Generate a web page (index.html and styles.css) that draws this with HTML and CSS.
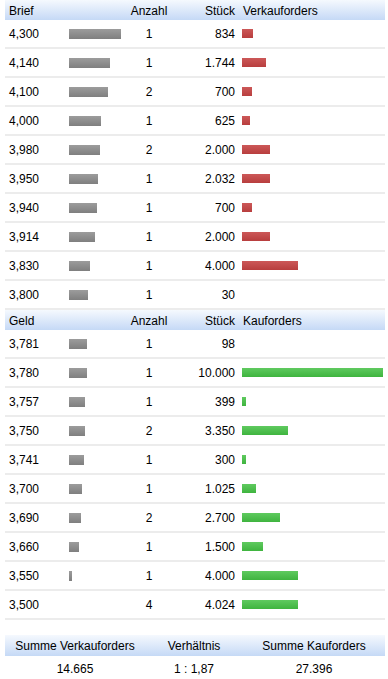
FILE: index.html
```html
<!DOCTYPE html>
<html lang="de">
<head>
<meta charset="utf-8">
<title>Orderbuch</title>
<link rel="stylesheet" href="styles.css">
</head>
<body>
<div class="book">
  <div class="row head">
    <div class="c-price">Brief</div>
    <div class="c-bar"></div>
    <div class="c-num">Anzahl</div>
    <div class="c-qty">Stück</div>
    <div class="c-ord">Verkauforders</div>
  </div>
  <div class="row"><div class="c-price">4,300</div><div class="c-bar"><span class="gbar" style="width:52px"></span></div><div class="c-num">1</div><div class="c-qty">834</div><div class="c-ord"><span class="rbar" style="width:11px"></span></div></div>
  <div class="row"><div class="c-price">4,140</div><div class="c-bar"><span class="gbar" style="width:41px"></span></div><div class="c-num">1</div><div class="c-qty">1.744</div><div class="c-ord"><span class="rbar" style="width:24px"></span></div></div>
  <div class="row"><div class="c-price">4,100</div><div class="c-bar"><span class="gbar" style="width:39px"></span></div><div class="c-num">2</div><div class="c-qty">700</div><div class="c-ord"><span class="rbar" style="width:10px"></span></div></div>
  <div class="row"><div class="c-price">4,000</div><div class="c-bar"><span class="gbar" style="width:32px"></span></div><div class="c-num">1</div><div class="c-qty">625</div><div class="c-ord"><span class="rbar" style="width:8px"></span></div></div>
  <div class="row"><div class="c-price">3,980</div><div class="c-bar"><span class="gbar" style="width:31px"></span></div><div class="c-num">2</div><div class="c-qty">2.000</div><div class="c-ord"><span class="rbar" style="width:28px"></span></div></div>
  <div class="row"><div class="c-price">3,950</div><div class="c-bar"><span class="gbar" style="width:29px"></span></div><div class="c-num">1</div><div class="c-qty">2.032</div><div class="c-ord"><span class="rbar" style="width:28px"></span></div></div>
  <div class="row"><div class="c-price">3,940</div><div class="c-bar"><span class="gbar" style="width:28px"></span></div><div class="c-num">1</div><div class="c-qty">700</div><div class="c-ord"><span class="rbar" style="width:10px"></span></div></div>
  <div class="row"><div class="c-price">3,914</div><div class="c-bar"><span class="gbar" style="width:26px"></span></div><div class="c-num">1</div><div class="c-qty">2.000</div><div class="c-ord"><span class="rbar" style="width:28px"></span></div></div>
  <div class="row"><div class="c-price">3,830</div><div class="c-bar"><span class="gbar" style="width:21px"></span></div><div class="c-num">1</div><div class="c-qty">4.000</div><div class="c-ord"><span class="rbar" style="width:56px"></span></div></div>
  <div class="row"><div class="c-price">3,800</div><div class="c-bar"><span class="gbar" style="width:19px"></span></div><div class="c-num">1</div><div class="c-qty">30</div><div class="c-ord"></div></div>

  <div class="row head">
    <div class="c-price">Geld</div>
    <div class="c-bar"></div>
    <div class="c-num">Anzahl</div>
    <div class="c-qty">Stück</div>
    <div class="c-ord">Kauforders</div>
  </div>
  <div class="row"><div class="c-price">3,781</div><div class="c-bar"><span class="gbar" style="width:18px"></span></div><div class="c-num">1</div><div class="c-qty">98</div><div class="c-ord"></div></div>
  <div class="row"><div class="c-price">3,780</div><div class="c-bar"><span class="gbar" style="width:18px"></span></div><div class="c-num">1</div><div class="c-qty">10.000</div><div class="c-ord"><span class="kbar" style="width:141px"></span></div></div>
  <div class="row"><div class="c-price">3,757</div><div class="c-bar"><span class="gbar" style="width:16px"></span></div><div class="c-num">1</div><div class="c-qty">399</div><div class="c-ord"><span class="kbar" style="width:4px"></span></div></div>
  <div class="row"><div class="c-price">3,750</div><div class="c-bar"><span class="gbar" style="width:16px"></span></div><div class="c-num">2</div><div class="c-qty">3.350</div><div class="c-ord"><span class="kbar" style="width:46px"></span></div></div>
  <div class="row"><div class="c-price">3,741</div><div class="c-bar"><span class="gbar" style="width:15px"></span></div><div class="c-num">1</div><div class="c-qty">300</div><div class="c-ord"><span class="kbar" style="width:4px"></span></div></div>
  <div class="row"><div class="c-price">3,700</div><div class="c-bar"><span class="gbar" style="width:13px"></span></div><div class="c-num">1</div><div class="c-qty">1.025</div><div class="c-ord"><span class="kbar" style="width:14px"></span></div></div>
  <div class="row"><div class="c-price">3,690</div><div class="c-bar"><span class="gbar" style="width:12px"></span></div><div class="c-num">2</div><div class="c-qty">2.700</div><div class="c-ord"><span class="kbar" style="width:38px"></span></div></div>
  <div class="row"><div class="c-price">3,660</div><div class="c-bar"><span class="gbar" style="width:10px"></span></div><div class="c-num">1</div><div class="c-qty">1.500</div><div class="c-ord"><span class="kbar" style="width:21px"></span></div></div>
  <div class="row"><div class="c-price">3,550</div><div class="c-bar"><span class="gbar" style="width:3px"></span></div><div class="c-num">1</div><div class="c-qty">4.000</div><div class="c-ord"><span class="kbar" style="width:56px"></span></div></div>
  <div class="row"><div class="c-price">3,500</div><div class="c-bar"></div><div class="c-num">4</div><div class="c-qty">4.024</div><div class="c-ord"><span class="kbar" style="width:56px"></span></div></div>
</div>

<div class="summary">
  <div class="srow shead">
    <div>Summe Verkauforders</div>
    <div>Verhältnis</div>
    <div>Summe Kauforders</div>
  </div>
  <div class="srow">
    <div>14.665</div>
    <div>1 : 1,87</div>
    <div>27.396</div>
  </div>
</div>
</body>
</html>
```
FILE: styles.css
```css
html, body {
  margin: 0;
  padding: 0;
  background: #fff;
}
body {
  padding: 0 3px 0 5px;
  font-family: "Liberation Sans", Arial, sans-serif;
  font-size: 12px;
  color: #000;
}
.book {
  width: 380px;
}
.row {
  display: grid;
  grid-template-columns: 60px 60px 48px 66px 1fr;
  align-items: center;
  height: 27px;
  border-bottom: 2px solid #ececec;
}
.row.head {
  height: 20px;
  border-bottom: 0;
  background: linear-gradient(#f5f9fe, #c5d9f6);
  padding-top: 1px;
  height: 19px;
}
.c-price {
  padding-left: 4px;
}
.c-bar {
  padding-left: 4px;
  display: flex;
  align-items: center;
}
.c-num {
  text-align: center;
}
.c-qty {
  text-align: right;
  padding-right: 4px;
}
.c-ord {
  padding-left: 3px;
  display: flex;
  align-items: center;
}
.row.head .c-ord {
  padding-left: 4px;
}
.gbar {
  display: block;
  height: 10px;
  background: linear-gradient(#9c9c9c, #7f7f7f);
}
.rbar {
  display: block;
  height: 9px;
  background: linear-gradient(#cc5858, #b83e3e);
}
.kbar {
  display: block;
  height: 9px;
  background: linear-gradient(#5fca5f, #3fb43f);
}
.summary {
  width: 380px;
  margin-top: 15px;
}
.srow {
  display: grid;
  grid-template-columns: 140px 98px 142px;
  text-align: center;
  align-items: center;
  height: 26px;
}
.srow.shead {
  height: 21px;
  background: linear-gradient(#f5f9fe, #c5d9f6);
}
```
